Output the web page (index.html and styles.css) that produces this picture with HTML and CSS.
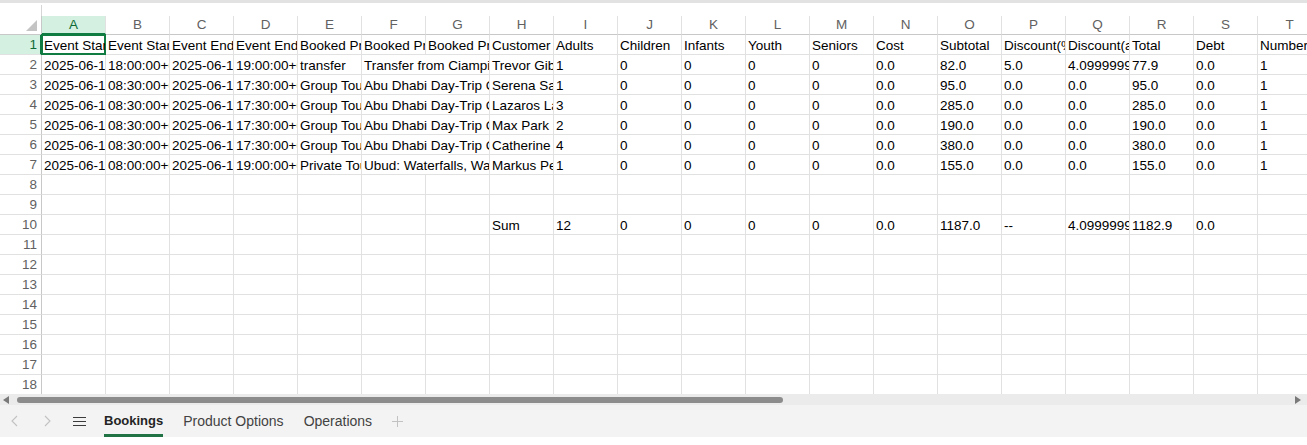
FILE: index.html
```html
<!DOCTYPE html>
<html>
<head>
<meta charset="utf-8">
<title>Bookings</title>
<link rel="stylesheet" href="styles.css">
</head>
<body>
<div class="app">
  <div class="top"><div class="top-corner"></div></div>
  <div class="sheet">
    <div class="grid">
      <div class="corner"><svg width="11" height="11" viewBox="0 0 11 11"><polygon points="11,0 11,11 0,11" fill="#c4c4c4"/></svg></div>
      <div class="ch on">A</div><div class="ch">B</div><div class="ch">C</div><div class="ch">D</div><div class="ch">E</div><div class="ch">F</div><div class="ch">G</div><div class="ch">H</div><div class="ch">I</div><div class="ch">J</div><div class="ch">K</div><div class="ch">L</div><div class="ch">M</div><div class="ch">N</div><div class="ch">O</div><div class="ch">P</div><div class="ch">Q</div><div class="ch">R</div><div class="ch">S</div><div class="ch">T</div>

      <div class="rh on">1</div>
      <div class="c sel">Event Start Date</div><div class="c">Event Start Time</div><div class="c">Event End Date</div><div class="c">Event End Time</div><div class="c">Booked Product</div><div class="c">Booked Product Option</div><div class="c">Booked Product Code</div><div class="c">Customer</div><div class="c">Adults</div><div class="c">Children</div><div class="c">Infants</div><div class="c">Youth</div><div class="c">Seniors</div><div class="c">Cost</div><div class="c">Subtotal</div><div class="c">Discount(%)</div><div class="c">Discount(amount)</div><div class="c">Total</div><div class="c">Debt</div><div class="c">Number of bookings</div>

      <div class="rh">2</div>
      <div class="c">2025-06-15</div><div class="c">18:00:00+04:00</div><div class="c">2025-06-15</div><div class="c">19:00:00+04:00</div><div class="c">transfer</div><div class="c s2">Transfer from Ciampino Airport</div><div class="c">Trevor Gibson</div><div class="c">1</div><div class="c">0</div><div class="c">0</div><div class="c">0</div><div class="c">0</div><div class="c">0.0</div><div class="c">82.0</div><div class="c">5.0</div><div class="c">4.0999999999999996</div><div class="c">77.9</div><div class="c">0.0</div><div class="c">1</div>

      <div class="rh">3</div>
      <div class="c">2025-06-16</div><div class="c">08:30:00+04:00</div><div class="c">2025-06-16</div><div class="c">17:30:00+04:00</div><div class="c">Group Tour</div><div class="c s2">Abu Dhabi Day-Trip Guided Tour</div><div class="c">Serena Sarkis</div><div class="c">1</div><div class="c">0</div><div class="c">0</div><div class="c">0</div><div class="c">0</div><div class="c">0.0</div><div class="c">95.0</div><div class="c">0.0</div><div class="c">0.0</div><div class="c">95.0</div><div class="c">0.0</div><div class="c">1</div>

      <div class="rh">4</div>
      <div class="c">2025-06-16</div><div class="c">08:30:00+04:00</div><div class="c">2025-06-16</div><div class="c">17:30:00+04:00</div><div class="c">Group Tour</div><div class="c s2">Abu Dhabi Day-Trip Guided Tour</div><div class="c">Lazaros Lazarou</div><div class="c">3</div><div class="c">0</div><div class="c">0</div><div class="c">0</div><div class="c">0</div><div class="c">0.0</div><div class="c">285.0</div><div class="c">0.0</div><div class="c">0.0</div><div class="c">285.0</div><div class="c">0.0</div><div class="c">1</div>

      <div class="rh">5</div>
      <div class="c">2025-06-16</div><div class="c">08:30:00+04:00</div><div class="c">2025-06-16</div><div class="c">17:30:00+04:00</div><div class="c">Group Tour</div><div class="c s2">Abu Dhabi Day-Trip Guided Tour</div><div class="c">Max Park</div><div class="c">2</div><div class="c">0</div><div class="c">0</div><div class="c">0</div><div class="c">0</div><div class="c">0.0</div><div class="c">190.0</div><div class="c">0.0</div><div class="c">0.0</div><div class="c">190.0</div><div class="c">0.0</div><div class="c">1</div>

      <div class="rh">6</div>
      <div class="c">2025-06-16</div><div class="c">08:30:00+04:00</div><div class="c">2025-06-16</div><div class="c">17:30:00+04:00</div><div class="c">Group Tour</div><div class="c s2">Abu Dhabi Day-Trip Guided Tour</div><div class="c">Catherine Moore</div><div class="c">4</div><div class="c">0</div><div class="c">0</div><div class="c">0</div><div class="c">0</div><div class="c">0.0</div><div class="c">380.0</div><div class="c">0.0</div><div class="c">0.0</div><div class="c">380.0</div><div class="c">0.0</div><div class="c">1</div>

      <div class="rh">7</div>
      <div class="c">2025-06-17</div><div class="c">08:00:00+08:00</div><div class="c">2025-06-17</div><div class="c">19:00:00+08:00</div><div class="c">Private Tour</div><div class="c s2">Ubud: Waterfalls, Walks and Temples</div><div class="c">Markus Peters</div><div class="c">1</div><div class="c">0</div><div class="c">0</div><div class="c">0</div><div class="c">0</div><div class="c">0.0</div><div class="c">155.0</div><div class="c">0.0</div><div class="c">0.0</div><div class="c">155.0</div><div class="c">0.0</div><div class="c">1</div>

      <div class="rh">8</div>
      <div class="rh">9</div>

      <div class="rh">10</div>
      <div class="c col-h">Sum</div><div class="c">12</div><div class="c">0</div><div class="c">0</div><div class="c">0</div><div class="c">0</div><div class="c">0.0</div><div class="c">1187.0</div><div class="c">--</div><div class="c">4.0999999999999996</div><div class="c">1182.9</div><div class="c">0.0</div>

      <div class="rh">11</div>
      <div class="rh">12</div>
      <div class="rh">13</div>
      <div class="rh">14</div>
      <div class="rh">15</div>
      <div class="rh">16</div>
      <div class="rh">17</div>
      <div class="rh">18</div>
    </div>
  </div>

  <div class="hscroll">
    <svg class="arrow-l" width="6" height="8" viewBox="0 0 6 8"><polygon points="6,0 6,8 0,4" fill="#7a7a7a"/></svg>
    <div class="thumb"></div>
    <svg class="arrow-r" width="6" height="8" viewBox="0 0 6 8"><polygon points="0,0 0,8 6,4" fill="#7a7a7a"/></svg>
  </div>

  <div class="tabbar">
    <svg class="nav nav-prev" width="7" height="12" viewBox="0 0 7 12"><polyline points="6,1 1,6 6,11" fill="none" stroke="#c2c2c2" stroke-width="1.1"/></svg>
    <svg class="nav nav-next" width="7" height="12" viewBox="0 0 7 12"><polyline points="1,1 6,6 1,11" fill="none" stroke="#c2c2c2" stroke-width="1.1"/></svg>
    <svg class="menu" width="13" height="11" viewBox="0 0 13 11"><path d="M0 1.5H13M0 5.5H13M0 9.5H13" stroke="#3b3b3b" stroke-width="1.1"/></svg>
    <div class="tab active">Bookings</div>
    <div class="tab">Product Options</div>
    <div class="tab">Operations</div>
    <svg class="add" width="11" height="11" viewBox="0 0 11 11"><path d="M5.5 0V11M0 5.5H11" stroke="#c2c2c2" stroke-width="1"/></svg>
  </div>
</div>
</body>
</html>
```

FILE: styles.css
```css
* { box-sizing: border-box; }

html, body {
  margin: 0;
  padding: 0;
  background: #ffffff;
}

body {
  width: 1307px;
  height: 445px;
  overflow: hidden;
  font-family: "Liberation Sans", Arial, sans-serif;
}

.app {
  width: 1307px;
  display: flex;
  flex-direction: column;
}

.top {
  height: 16px;
  border-top: 3px solid #e2e2e2;
  background: #ffffff;
}

.top-corner {
  width: 42px;
  height: 11px;
  margin-top: 2px;
  border-right: 1px solid #d6d6d6;
}

.sheet {
  height: 378px;
  overflow: hidden;
}

.grid {
  display: grid;
  grid-template-columns: 42px repeat(20, 64px);
  grid-template-rows: 19px repeat(18, 20px);
  width: 1322px;
  background-color: #ffffff;
  background-image:
    repeating-linear-gradient(to right, transparent 0 63px, #e1e1e1 63px 64px),
    repeating-linear-gradient(to bottom, transparent 0 19px, #e1e1e1 19px 20px);
  background-position: 42px 0, 0 19px;
}

.corner {
  display: flex;
  justify-content: flex-end;
  align-items: flex-end;
  padding: 0 4px 3px 0;
  background: #ffffff;
  border-right: 1px solid #c8c8c8;
  border-bottom: 1px solid #c8c8c8;
}

.ch {
  font-size: 13.5px;
  line-height: 18px;
  color: #616161;
  text-align: center;
  background: #ffffff;
  border-right: 1px solid #e1e1e1;
  border-bottom: 1px solid #c8c8c8;
}

.ch.on {
  background: #d3f0e0;
  color: #0f6a36;
  border-bottom: 2px solid #107c41;
  line-height: 17px;
}

.rh {
  grid-column: 1;
  font-size: 13.5px;
  line-height: 20px;
  color: #616161;
  text-align: right;
  padding-right: 4px;
  background: #ffffff;
  border-right: 1px solid #c8c8c8;
  border-bottom: 1px solid #e1e1e1;
}

.rh.on {
  background: #d3f0e0;
  color: #0f6a36;
  border-right: 2px solid #107c41;
  padding-right: 3px;
}

.c {
  margin: 0 1px 1px 0;
  padding: 1px 0 0 2px;
  font-size: 13.5px;
  line-height: 19px;
  color: #000000;
  white-space: nowrap;
  overflow: hidden;
}

.c.s2 {
  grid-column: span 2;
  background: #ffffff;
}

.c.col-h {
  grid-column: 9;
}

.c.sel {
  box-shadow: 0 0 0 1px #107c41, inset 0 0 0 1px #107c41;
}

.hscroll {
  height: 11px;
  background: #ebebeb;
  display: flex;
  align-items: center;
}

.arrow-l {
  margin-left: 3px;
}

.thumb {
  margin-left: 8px;
  width: 766px;
  height: 6px;
  border-radius: 3px;
  background: #8c8c8c;
}

.arrow-r {
  margin-left: auto;
  margin-right: 6px;
}

.tabbar {
  height: 32px;
  background: #f3f3f3;
  display: flex;
  align-items: center;
}

.nav-prev {
  margin-left: 11px;
}

.nav-next {
  margin-left: 26px;
}

.menu {
  margin-left: 22px;
}

.tab {
  position: relative;
  height: 32px;
  line-height: 32px;
  font-size: 14px;
  color: #424242;
  margin-left: 20px;
  white-space: nowrap;
}

.menu + .tab {
  margin-left: 18px;
}

.tab.active {
  font-weight: bold;
  font-size: 13px;
  color: #242424;
}

.tab.active::after {
  content: "";
  position: absolute;
  left: 0;
  right: 0;
  bottom: 0;
  height: 3px;
  background: #217346;
}

.add {
  margin-left: 20px;
}
```
